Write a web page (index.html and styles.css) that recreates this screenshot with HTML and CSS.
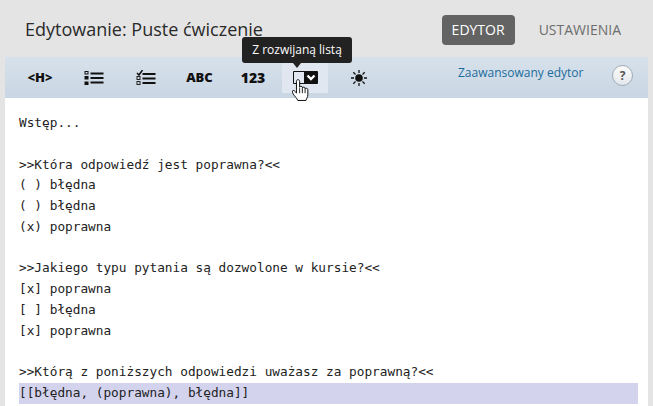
FILE: index.html
```html
<!DOCTYPE html>
<html lang="pl">
<head>
<meta charset="utf-8">
<title>Edytowanie: Puste ćwiczenie</title>
<link rel="stylesheet" href="styles.css">
</head>
<body>
<header class="head">
  <h1 class="title">Edytowanie: Puste ćwiczenie</h1>
  <nav class="tabs">
    <span class="tab active">EDYTOR</span>
    <span class="tab">USTAWIENIA</span>
  </nav>
</header>
<div class="toolbar">
  <span class="tool tool-h">&lt;H&gt;</span>
  <span class="tool tool-list">
    <svg width="20" height="14" viewBox="0 0 20 14"><g fill="none" stroke="#111" stroke-width="1"><rect x="1" y="0.5" width="3" height="2.5"/></g><rect x="0.5" y="5" width="4" height="3.5" fill="#111"/><rect x="0.5" y="10.5" width="4" height="3.5" fill="#111"/><path d="M6.5 2.5h13M6.5 7h13M6.5 11.500h13" stroke="#111" stroke-width="2.200"/></svg>
  </span>
  <span class="tool tool-check">
    <svg width="20" height="16" viewBox="0 0 20 16"><path d="M1 3l2 2 3.500-5" fill="none" stroke="#111" stroke-width="1.500"/><g fill="none" stroke="#222" stroke-width="1"><rect x="1" y="6.500" width="3" height="3"/><rect x="1" y="11.500" width="3" height="3"/></g><path d="M6.500 4h13M6.500 8.500h13M6.500 13h13" stroke="#111" stroke-width="2.200"/></svg>
  </span>
  <span class="tool tool-abc">ABC</span>
  <span class="tool tool-num">123</span>
  <span class="tool tool-drop">
    <svg width="25" height="13" viewBox="0 0 25 13"><path d="M12 .5H.5v12H12" fill="none" stroke="#111"/><rect x="11" y="0" width="14" height="13" rx="1" fill="#111"/><path d="M14.500 4.500l3.500 3.500 3.500-3.500" fill="none" stroke="#fff" stroke-width="2.400"/></svg>
  </span>
  <span class="tool tool-sun">
    <svg width="16" height="16" viewBox="0 0 16 16"><circle cx="8" cy="8" r="3.800" fill="#111"/><path d="M8 0v3M8 13v3M0 8h3M13 8h3M2.300 2.300l2.200 2.200M11.500 11.500l2.200 2.200M2.300 13.700l2.200-2.200M11.500 4.500l2.200-2.200" stroke="#111" stroke-width="1.300"/></svg>
  </span>
  <a class="advanced">Zaawansowany edytor</a>
  <span class="help">?</span>
  <div class="tooltip">Z rozwijaną listą</div>
  <svg class="cursor" width="20" height="24" viewBox="0 0 22 26"><path d="M6 12V3.500c0-2.500 3.500-2.500 3.500 0V10c0-1.500 3-1.500 3 0v1c0-1.500 3-1.500 3 0v1c0-1.500 3-1.200 3 .5V18c0 3-1.500 4.500-2 6.500H7.500C6.500 22 4 20 2.500 17.500 1 15 1.500 13 3 13.500c1 .3 2 1.500 3 3z" fill="#fff" stroke="#111" stroke-width="1.100" stroke-linejoin="round"/><path d="M9.500 11v5.500M12.500 11v5.500M15.500 12v4.500" stroke="#111" stroke-width="1"/></svg>
</div>
<main class="editor">
  <div class="line">Wstęp...</div>
  <div class="line">&nbsp;</div>
  <div class="line">&gt;&gt;Która odpowiedź jest poprawna?&lt;&lt;</div>
  <div class="line">( ) błędna</div>
  <div class="line">( ) błędna</div>
  <div class="line">(x) poprawna</div>
  <div class="line">&nbsp;</div>
  <div class="line">&gt;&gt;Jakiego typu pytania są dozwolone w kursie?&lt;&lt;</div>
  <div class="line">[x] poprawna</div>
  <div class="line">[ ] błędna</div>
  <div class="line">[x] poprawna</div>
  <div class="line">&nbsp;</div>
  <div class="line">&gt;&gt;Którą z poniższych odpowiedzi uważasz za poprawną?&lt;&lt;</div>
  <div class="line selected">[[błędna, (poprawna), błędna]]</div>
</main>
</body>
</html>
```
FILE: styles.css
```css
html, body {
  margin: 0;
  padding: 0;
  height: 406px;
  overflow: hidden;
}
body {
  background: #e4e4e4;
  font-family: "Open Sans", sans-serif;
  color: #222;
  display: flex;
  flex-direction: column;
}
.head {
  height: 57px;
  flex: none;
  display: flex;
  align-items: flex-start;
  justify-content: space-between;
  padding: 0 32px 0 25px;
  box-sizing: border-box;
}
.title {
  margin: 16px 0 0;
  font-size: 18px;
  line-height: 26px;
  font-weight: 400;
  color: #2a2a2a;
}
.tabs {
  display: flex;
  margin-top: 15px;
  gap: 24px;
}
.tab {
  height: 30px;
  line-height: 30px;
  font-size: 14px;
  color: #6d6d6d;
}
.tab.active {
  background: #636363;
  color: #fff;
  padding: 0 10px;
  border-radius: 4px;
}
.toolbar {
  position: relative;
  flex: none;
  height: 41px;
  margin: 0 5px;
  background: linear-gradient(#d6e1eb, #c9d6e3);
  display: flex;
  align-items: center;
  color: #111;
}
.tool {
  display: flex;
  align-items: center;
  justify-content: center;
  flex: none;
  font-weight: 800;
  font-size: 14px;
  line-height: 1;
}
.tool-h { width: 26px; margin-left: 22px; font-size: 13px; }
.tool-list { width: 20px; margin-left: 31px; }
.tool-check { width: 20px; margin-left: 32px; }
.tool-abc { width: 27px; margin-left: 30px; font-size: 13px; }
.tool-num { width: 26px; margin-left: 27px; }
.tool-drop {
  width: 46px;
  height: 32px;
  margin-left: 16px;
  align-self: flex-start;
  padding: 4px 0 0;
  background: #e0e7f0;
}
.tool-sun { width: 16px; margin-left: 23px; }
.advanced {
  margin-left: 91px;
  margin-top: -10px;
  font-size: 12px;
  color: #1c6c9c;
  white-space: nowrap;
}
.help {
  position: absolute;
  right: 15px;
  top: 8px;
  box-sizing: border-box;
  width: 21px;
  height: 21px;
  border-radius: 50%;
  border: 1px solid #9fa9b3;
  background: linear-gradient(#fafafa, #e4e8ec);
  color: #555;
  font-size: 12px;
  font-weight: 700;
  line-height: 19px;
  text-align: center;
}
.tooltip {
  position: absolute;
  left: 237px;
  top: -20px;
  width: 110px;
  height: 26px;
  background: #222;
  color: #fff;
  font-size: 12px;
  line-height: 26px;
  text-align: center;
  border-radius: 3px;
}
.tooltip::after {
  content: "";
  position: absolute;
  left: 51px;
  top: 26px;
  border: 4px solid transparent;
  border-top: 5px solid #222;
  border-bottom: 0;
}
.cursor {
  position: absolute;
  left: 286px;
  top: 21px;
}
.editor {
  flex: 1;
  margin: 0 5px;
  padding: 15px 14px 0;
  background: #fff;
  font-family: "DejaVu Sans Mono", monospace;
  font-size: 12.750px;
  line-height: 20.750px;
  color: #222;
  overflow: hidden;
}
.line {
  white-space: pre;
}
.selected {
  background: #d3d3ee;
  margin-right: -4px;
}
```
